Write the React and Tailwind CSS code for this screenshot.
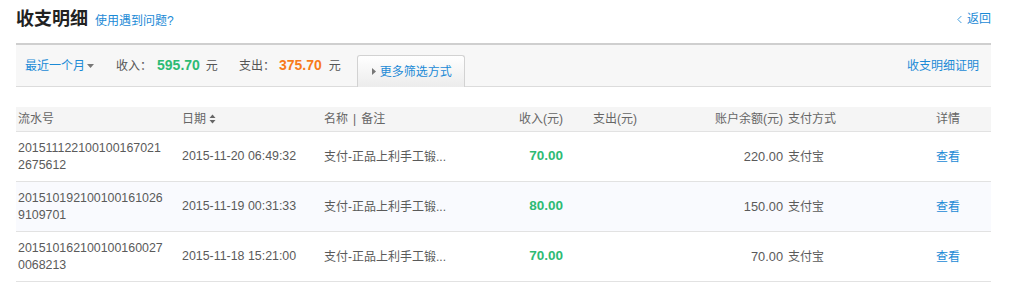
import { ChevronLeft } from "lucide-react";

const ROWS = [
  { id: ["201511122100100167021", "2675612"], date: "2015-11-20 06:49:32", income: "70.00", balance: "220.00" },
  { id: ["201510192100100161026", "9109701"], date: "2015-11-19 00:31:33", income: "80.00", balance: "150.00", alt: true },
  { id: ["201510162100100160027", "0068213"], date: "2015-11-18 15:21:00", income: "70.00", balance: "70.00" },
];

const COLS = "grid grid-cols-[162px_142px_180px_68px_132px_86px_114px_91px]";

const SortIcon = () => (
  <svg width="7" height="10" viewBox="0 0 7 10" className="ml-[3px]">
    <path d="M3.5 0.5L6.5 4H0.5Z" fill="#666" />
    <path d="M3.5 9.5L6.5 6H0.5Z" fill="#666" />
  </svg>
);

export default function App() {
  return (
    <div className="min-h-screen bg-white pl-[16px] pr-[33px] text-[12px] text-[#5a5a5a]" style={{ fontFamily: '"Liberation Sans", "Noto Sans CJK SC", sans-serif' }}>
      {/* heading */}
      <div className="flex h-[43px] items-center justify-between pb-[5px]">
        <div className="flex items-baseline">
          <h1 className="text-[18px] font-bold text-[#222]">收支明细</h1>
          <a className="ml-[7px] text-[12px] text-[#1b8ad6]">使用遇到问题?</a>
        </div>
        <a className="flex items-center text-[12px] text-[#1b8ad6]">
          <ChevronLeft className="h-[13px] w-[13px]" strokeWidth={1.5} />
          <span className="ml-[1px]">返回</span>
        </a>
      </div>

      {/* filter bar */}
      <div className="flex h-[44px] items-stretch border-t-2 border-b border-t-[#cfcfcf] border-b-[#dcdcdc] bg-[#f7f7f7] pl-[9px] pr-[12px]">
        <div className="flex items-center">
          <span className="text-[#1b8ad6]">最近一个月</span>
          <svg width="7" height="4" viewBox="0 0 7 4" className="ml-[2px]">
            <path d="M0 0H7L3.5 4Z" fill="#777" />
          </svg>
          <span className="ml-[22px] text-[#555]">收入：</span>
          <span className="ml-[5px] text-[14px] font-bold text-[#2dbb74]">595.70</span>
          <span className="ml-[6px] text-[#555]">元</span>
          <span className="ml-[21px] text-[#555]">支出：</span>
          <span className="ml-[4px] text-[14px] font-bold text-[#f77b1c]">375.70</span>
          <span className="ml-[7px] text-[#555]">元</span>
        </div>
        <div className="-mb-px ml-[16px] flex h-[32px] w-[108px] items-center self-end rounded-t-[3px] border border-b-0 border-[#d2d2d2] bg-gradient-to-b from-white to-[#ececec] pl-[14px]">
          <svg width="4" height="7" viewBox="0 0 4 7">
            <path d="M0 0L4 3.5L0 7Z" fill="#777" />
          </svg>
          <span className="ml-[4px] text-[#1b8ad6]">更多筛选方式</span>
        </div>
        <div className="ml-auto flex items-center">
          <a className="text-[#1b8ad6]">收支明细证明</a>
        </div>
      </div>

      {/* table */}
      <div className="mt-[20px]">
        <div className={`${COLS} h-[25px] items-center border-b border-[#e2e2e2] bg-[#f5f5f5] text-[#666]`}>
          <div className="pl-[2px]">流水号</div>
          <div className="flex items-center pl-[4px]">日期<SortIcon /></div>
          <div className="pl-[4px]">名称<span className="mx-[5px]">|</span>备注</div>
          <div className="pr-[5px] text-right">收入(元)</div>
          <div className="pl-[25px]">支出(元)</div>
          <div className="pr-[3px] text-right">账户余额(元)</div>
          <div className="pl-[2px]">支付方式</div>
          <div className="pl-[36px]">详情</div>
        </div>
        {ROWS.map((r) => (
          <div key={r.id[0]} className={`${COLS} h-[50px] items-center border-b border-[#e2e2e2] ${r.alt ? "bg-[#f9fafe]" : "bg-white"}`}>
            <div className="pl-[2px] text-[12.4px] leading-[17px]">
              <div>{r.id[0]}</div>
              <div>{r.id[1]}</div>
            </div>
            <div className="pl-[4px] text-[12.4px]">{r.date}</div>
            <div className="pl-[4px]">支付-正品上利手工锻...</div>
            <div className="pr-[5px] text-right text-[13.5px] font-bold text-[#2dbb74]">{r.income}</div>
            <div className="pl-[25px]"></div>
            <div className="pr-[3px] text-right text-[12.8px]">{r.balance}</div>
            <div className="pl-[2px]">支付宝</div>
            <div className="pl-[36px] text-[#1b8ad6]">查看</div>
          </div>
        ))}
      </div>
    </div>
  );
}
